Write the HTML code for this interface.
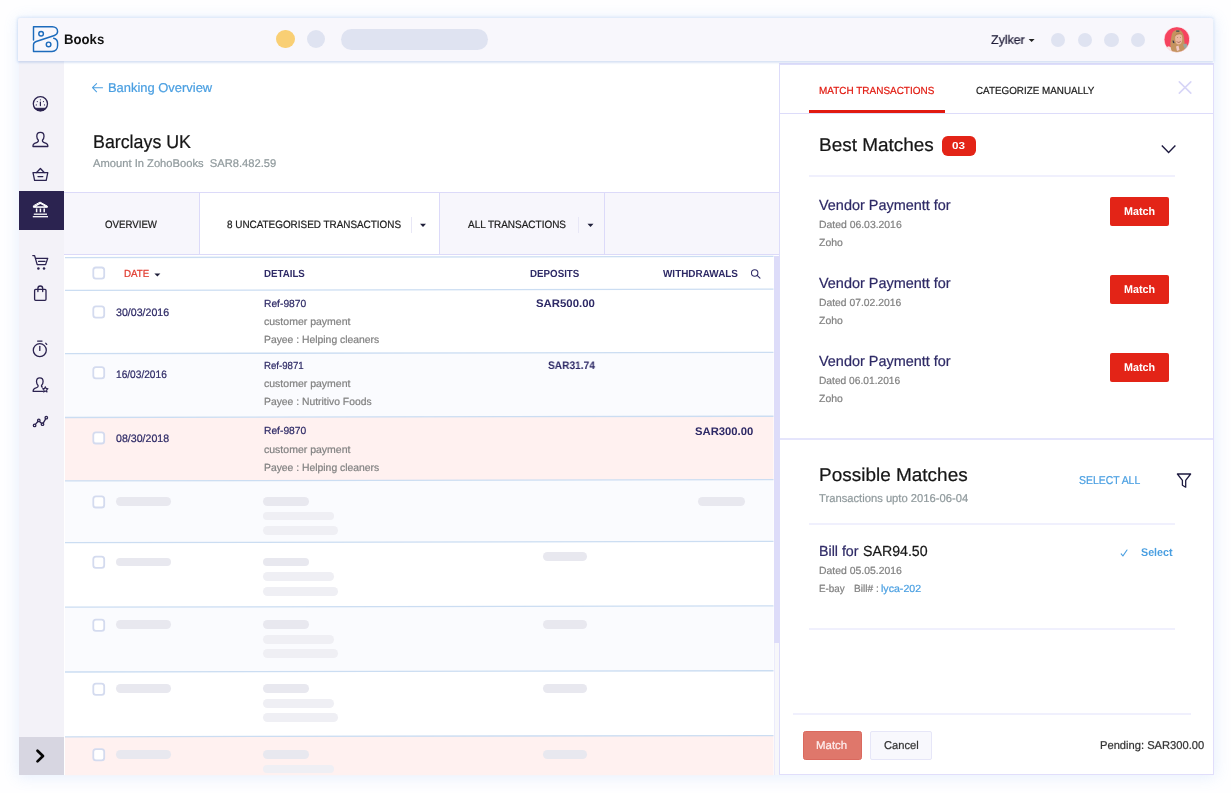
<!DOCTYPE html>
<html lang="en">
<head>
<meta charset="utf-8">
<title>Books - Banking</title>
<style>
*{box-sizing:border-box;margin:0;padding:0}
html,body{width:1231px;height:793px;overflow:hidden;background:#fefeff;font-family:"Liberation Sans",sans-serif;color:#1c1c1c}
.a{position:absolute}
.t{position:absolute;white-space:nowrap;line-height:1;transform-origin:0 0;text-rendering:geometricPrecision;-webkit-text-stroke:.22px currentColor}
.b{font-weight:700;-webkit-text-stroke:0}
#win{position:absolute;left:18.5px;top:18.5px;width:1195.5px;height:756.7px;background:#fff;box-shadow:0 1px 14px 1px rgba(105,160,240,.16)}
#hdr{position:absolute;left:18.4px;top:18.4px;width:1195px;height:42.2px;background:#f8f7fc;border-radius:2px 2px 0 0;box-shadow:0 0 3px .3px rgba(110,160,230,.2),0 2px 2px rgba(150,170,220,.2)}
#side{position:absolute;left:18.6px;top:61px;width:45.4px;height:714px;background:#f3f2f8}
.dot{position:absolute;border-radius:50%;background:#dfe3f1}
#tabs{position:absolute;left:64px;top:192px;width:716px;height:63px;background:#f7f6fc;border-top:1px solid #dcdaf9;border-bottom:1px solid #dcdaf9}
.sk{position:absolute;height:8.8px;border-radius:4.4px;background:#e8e8ef}
.sk2{position:absolute;height:8.8px;border-radius:4.4px;background:#efeff4}
#panel{position:absolute;left:779px;top:64px;width:435px;height:711px;background:#fff}
.pb{position:absolute;background:#dddcfa}
.btn{position:absolute;background:#e32417;border-radius:2px}
.hl{position:absolute;height:2px;background:#f0f0fd}
svg{position:absolute;overflow:visible}
#txt{will-change:transform}
</style>
</head>
<body>
<div id="win"></div>
<div id="side"></div>
<div class="a" style="left:18.6px;top:191.1px;width:45.4px;height:38.5px;background:#2b2350"></div>
<div class="a" style="left:18.6px;top:736.9px;width:45.4px;height:38.1px;background:#d7d6e1"></div>
<!-- main: tabs -->
<div id="tabs"></div>
<div class="a" style="left:199px;top:193px;width:241px;height:61px;background:#fff;border-left:1px solid #dcdaf9;border-right:1px solid #dcdaf9"></div>
<div class="a" style="left:603.8px;top:193px;width:1.2px;height:61px;background:#dcdaf9"></div>
<div class="a" style="left:411px;top:217px;width:1px;height:16px;background:#e8e7f6"></div>
<div class="a" style="left:578px;top:217px;width:1px;height:16px;background:#e8e7f6"></div>
<!-- table rows -->
<svg width="1231" height="793" viewBox="0 0 1231 793" style="left:0;top:0" fill="none">
<path d="M65 353.6L773.5 352.35V416.25L65 417.5Z" fill="#fafbfe"/>
<path d="M65 417.5L773.5 416.25V479.65L65 480.9Z" fill="#fff1f0"/>
<path d="M65 480.9L773.5 479.65V541.45L65 542.7Z" fill="#fafbfe"/>
<path d="M65 607.2L773.5 605.95V670.75L65 672Z" fill="#fafbfe"/>
<path d="M65 736.8L773.5 735.55V775.2H65Z" fill="#fff1f0"/>
<path d="M65 257.6L773.5 256.35M65 290.4L773.5 289.15M65 353.6L773.5 352.35M65 417.5L773.5 416.25M65 480.9L773.5 479.65M65 542.7L773.5 541.45M65 607.2L773.5 605.95M65 672L773.5 670.75M65 736.8L773.5 735.55" stroke="#cbddf2" stroke-width="1.3"/>
</svg>
<!-- scrollbar -->
<div class="a" style="left:773.5px;top:256px;width:6.2px;height:519px;background:#f7f7fa;border-left:1px solid #ebebfb;border-right:1px solid #e6e4fa"></div>
<div class="a" style="left:773.5px;top:256px;width:6.2px;height:386.9px;background:#dddcf9"></div>
<!-- checkboxes -->
<!-- panel -->
<div id="panel"></div>
<div class="pb" style="left:778.6px;top:63.3px;width:1.5px;height:712px"></div>
<div class="pb" style="left:778.6px;top:63.4px;width:435.6px;height:1.4px;background:#e0dffb"></div>
<div class="pb" style="left:1212.9px;top:63.3px;width:1.3px;height:712px;background:#e1defb"></div>
<div class="pb" style="left:778.6px;top:773.9px;width:435.6px;height:1.4px;background:#e1defb"></div>
<div class="a" style="left:780px;top:112.5px;width:433px;height:1.5px;background:#dddcfa"></div>
<div class="a" style="left:809px;top:110.2px;width:135.7px;height:3.3px;background:#e11a10"></div>
<div class="a" style="left:941.5px;top:135.6px;width:34px;height:20px;border-radius:5.8px;background:#e32417"></div>
<div class="hl" style="left:809px;top:175px;width:366.3px"></div>
<div class="btn" style="left:1110.2px;top:197px;width:59px;height:28.7px"></div>
<div class="btn" style="left:1110.2px;top:275px;width:59px;height:28.7px"></div>
<div class="btn" style="left:1110.2px;top:353px;width:59px;height:28.7px"></div>
<div class="a" style="left:780px;top:438.4px;width:433px;height:1.6px;background:#e5e5fc"></div>
<div class="hl" style="left:809px;top:523px;width:366.3px"></div>
<div class="hl" style="left:809px;top:628px;width:366.3px"></div>
<div class="hl" style="left:793.2px;top:713px;width:398px"></div>
<div class="a" style="left:802.6px;top:731px;width:59.2px;height:29px;background:#df776b;border:1px solid #da695e;border-radius:2.5px"></div>
<div class="a" style="left:870.4px;top:731px;width:61.4px;height:29px;background:#f8f8fd;border:1px solid #e6e6f8;border-radius:2px"></div>
<!-- header -->
<div id="hdr"></div>
<div class="dot" style="left:276.2px;top:30.1px;width:18.4px;height:18.4px;background:#f9cf74"></div>
<div class="dot" style="left:306.8px;top:30.1px;width:18.4px;height:18.4px"></div>
<div class="a" style="left:341.3px;top:28.7px;width:147px;height:21.3px;border-radius:10.7px;background:#dfe3f1"></div>
<div class="dot" style="left:1050.7px;top:32.7px;width:14.6px;height:14.6px"></div>
<div class="dot" style="left:1077.5px;top:32.7px;width:14.6px;height:14.6px"></div>
<div class="dot" style="left:1104px;top:32.7px;width:14.6px;height:14.6px"></div>
<div class="dot" style="left:1130.6px;top:32.7px;width:14.6px;height:14.6px"></div>
<!-- skeleton bars -->
<div class="sk" style="left:116px;top:497.2px;width:55px"></div>
<div class="sk" style="left:263px;top:497.2px;width:46px"></div>
<div class="sk2" style="left:263px;top:511.6px;width:70.5px"></div>
<div class="sk2" style="left:263px;top:526px;width:75.3px"></div>
<div class="sk" style="left:697.5px;top:497.2px;width:47.5px"></div>
<div class="sk" style="left:116px;top:557.7px;width:55px"></div>
<div class="sk" style="left:263px;top:557.7px;width:46px"></div>
<div class="sk2" style="left:263px;top:572.3px;width:70.5px"></div>
<div class="sk2" style="left:263px;top:587px;width:75.3px"></div>
<div class="sk" style="left:542.5px;top:552px;width:44.5px"></div>
<div class="sk" style="left:116px;top:620.3px;width:55px"></div>
<div class="sk" style="left:263px;top:620.3px;width:46px"></div>
<div class="sk2" style="left:263px;top:635px;width:70.5px"></div>
<div class="sk2" style="left:263px;top:649.4px;width:75.3px"></div>
<div class="sk" style="left:542.5px;top:620.3px;width:44.5px"></div>
<div class="sk" style="left:116px;top:684.3px;width:55px"></div>
<div class="sk" style="left:263px;top:684.3px;width:46px"></div>
<div class="sk2" style="left:263px;top:698.8px;width:70.5px"></div>
<div class="sk2" style="left:263px;top:713.2px;width:75.3px"></div>
<div class="sk" style="left:542.5px;top:684.3px;width:44.5px"></div>
<div class="sk" style="left:116px;top:750.3px;width:55px"></div>
<div class="sk" style="left:263px;top:750.3px;width:46px"></div>
<div class="sk2" style="left:263px;top:764.6px;width:70.5px;height:8.8px"></div>
<div class="sk" style="left:542.5px;top:750.3px;width:44.5px"></div>
<!-- icons -->
<svg width="1231" height="793" viewBox="0 0 1231 793" style="left:0;top:0" fill="none" stroke-linecap="round" stroke-linejoin="round">
<!-- checkboxes -->
<g fill="#fff" stroke="#d4dbef" stroke-width="1.8"><rect x="93.3" y="267.5" width="10.9" height="11.2" rx="2.6"/><rect x="93.3" y="306.4" width="10.9" height="11.2" rx="2.6"/><rect x="93.3" y="367.2" width="10.9" height="11.2" rx="2.6"/><rect x="93.3" y="432.3" width="10.9" height="11.2" rx="2.6"/><rect x="93.3" y="496.3" width="10.9" height="11.2" rx="2.6"/><rect x="93.3" y="556.6" width="10.9" height="11.2" rx="2.6"/><rect x="93.3" y="619.6" width="10.9" height="11.2" rx="2.6"/><rect x="93.3" y="683.7" width="10.9" height="11.2" rx="2.6"/><rect x="93.3" y="749.2" width="10.9" height="11.2" rx="2.6"/></g>
<!-- logo -->
<g stroke="#1c6bbc" stroke-width="1.45">
<path d="M33.5 39.9V26.7H52.3C55.5 26.7 57.6 28.9 57.6 31.6C57.6 33.5 56.6 34.8 54.4 35.5L36.2 41.5C34.4 42.1 33.5 43.2 33.5 44.8V51.4H52C55.5 51.4 57.6 48.8 57.6 45.6V43C57.6 40.7 56.3 38.9 53.7 38.2"/>
<circle cx="41.1" cy="33.7" r="2.3"/><circle cx="48.6" cy="44.4" r="2.3"/>
</g>
<!-- sidebar icons -->
<g stroke="#2b2350" stroke-width="1.3">
<!-- dashboard -->
<circle cx="40.4" cy="103.8" r="7.1"/>
<path d="M34.9 108.3H45.9A7.1 7.1 0 0 1 34.9 108.3Z" fill="#2b2350" stroke-width="1"/>
<path d="M40.4 102V105.6" stroke-width="1.2"/>
<g fill="#2b2350" stroke="none"><circle cx="36.3" cy="104.9" r=".6"/><circle cx="37.3" cy="101.6" r=".6"/><circle cx="40.4" cy="99.8" r=".6"/><circle cx="43.5" cy="101.6" r=".6"/><circle cx="44.5" cy="104.9" r=".6"/></g>
<!-- person -->
<path d="M40.4 132.4C42.6 132.4 44 134 44 136.2C44 138 43.3 139.3 42.4 140.2C42.2 141.3 42.6 141.9 43.6 142.3L46.2 143.4C47.3 143.9 47.8 144.6 47.8 145.6V146.5H33V145.6C33 144.6 33.5 143.9 34.6 143.4L37.2 142.3C38.2 141.9 38.6 141.3 38.4 140.2C37.5 139.3 36.8 138 36.8 136.2C36.8 134 38.2 132.4 40.4 132.4Z"/>
<!-- basket -->
<path d="M33 172.7H47.8L46.2 180.3H34.6Z"/><path d="M36.6 172.5L40.4 168.5L44.2 172.5"/><path d="M38 176.6H42.8"/>
<!-- cart -->
<path d="M32.8 255.6H34.6L37.2 264.6H45.6L47.7 258.4H36"/><path d="M38.6 261.4H45"/>
<g fill="#2b2350" stroke="none"><circle cx="38.4" cy="268.4" r="1.25"/><circle cx="44" cy="268.4" r="1.25"/></g>
<!-- bag -->
<path d="M35.6 289.4H45C45.6 289.4 46 289.8 46 290.4V299.3C46 299.9 45.6 300.3 45 300.3H35.6C35 300.3 34.6 299.9 34.6 299.3V290.4C34.6 289.8 35 289.4 35.6 289.4Z"/><path d="M37.9 291.6V288.4A2.4 2.4 0 0 1 42.7 288.4V291.6"/>
<!-- timer -->
<circle cx="39.8" cy="350.2" r="6.5"/><path d="M37.6 341.1H42"/><path d="M39.8 346.4V350.4"/><path d="M45.8 343.3L46.7 344.4"/>
<!-- person star -->
<path d="M42.6 391.4H33.2V390.6C33.2 389.6 33.7 388.9 34.8 388.4L37 387.5C38 387.1 38.3 386.5 38.1 385.5C37.2 384.6 36.5 383.3 36.5 381.6C36.5 379.4 37.8 377.9 39.8 377.9C41.8 377.9 43.1 379.4 43.1 381.6C43.1 383.3 42.4 384.6 41.5 385.5C41.4 386.3 41.6 386.8 42.2 387.1"/>
<path d="M45.3 386.7L46.1 388.4L48 388.7L46.6 390L47 391.9L45.3 391L43.6 391.9L44 390L42.6 388.7L44.5 388.4Z" stroke-width="1.1"/>
<!-- graph -->
<path d="M35.4 424.4L38.1 421.3M39.4 421.6L41.8 423.4M43.2 423.1L45.7 418.8"/>
<circle cx="34.6" cy="425.4" r="1.25"/><circle cx="38.8" cy="420.4" r="1.25"/><circle cx="42.5" cy="424.2" r="1.25"/><circle cx="46.3" cy="417.7" r="1.25"/>
</g>
<!-- bank (active) -->
<g stroke="#fff" stroke-width="1.3">
<path d="M40.4 202.3L47.4 206.2V207.3H33.4V206.2Z" fill="#fff" stroke-width="1"/>
<path d="M40.4 203.9L44.6 206.2H36.2Z" fill="#2b2350" stroke="none"/>
<path d="M36.6 208.6V212.3M40.4 208.6V212.3M44.2 208.6V212.3" stroke-width="1.5" stroke-linecap="butt"/>
<path d="M33.8 214.2H47" stroke-linecap="butt"/><path d="M32.8 216.7H48" stroke-linecap="butt"/>
</g>
<!-- expand chevron -->
<path d="M37.5 750.7L43 756L37.5 761.4" stroke="#050505" stroke-width="2.7" stroke-linecap="round" stroke-linejoin="round"/>
<!-- back arrow -->
<path d="M102.6 87.7H92.6M96.6 83.6L92.5 87.7L96.6 91.8" stroke="#4a9fe1" stroke-width="1.05"/>
<!-- carets -->
<g fill="#1f1f3a" stroke="none">
<path d="M420 223.8H426L423 226.9Z"/><path d="M587.5 223.8H593.5L590.5 226.9Z"/>
<path d="M154.4 273.4H160.4L157.4 276.5Z"/>
<path d="M1028.6 38.9H1034.6L1031.6 42Z" fill="#222"/>
</g>
<!-- search -->
<g stroke="#2e2a66" stroke-width="1.05"><circle cx="754.7" cy="273" r="3.2"/><path d="M757.1 275.4L760 278.2"/></g>
<!-- close -->
<path d="M1179.3 81.9L1190.8 93.1M1190.8 81.9L1179.3 93.1" stroke="#d7d5f7" stroke-width="1.6"/>
<!-- chevron down -->
<path d="M1161.8 145.6L1168.6 152.4L1175.4 145.6" stroke="#1d1a3f" stroke-width="1.4" stroke-linecap="butt" stroke-linejoin="miter"/>
<!-- filter -->
<path d="M1177.4 474H1190.6L1185.7 480.4V487.2L1182.4 485.2V480.4Z" stroke="#1d1a3f" stroke-width="1.3"/>
<!-- check -->
<path d="M1121.2 553.9L1122.9 556L1127 550" stroke="#4a9fe1" stroke-width="1.15"/>
<!-- avatar -->
<clipPath id="av"><circle cx="1176.9" cy="39.6" r="12.7"/></clipPath>
<g clip-path="url(#av)" stroke="none">
<rect x="1164" y="26" width="26" height="27" fill="#f6435f"/>
<path d="M1164 48.500L1168.500 46.200L1172 47.500V53H1164Z" fill="#f7e6e2"/>
<path d="M1177.800 29.800C1174.600 29.800 1172.300 32 1171.600 35.500C1171 38.500 1170.800 40.500 1170.400 43C1170 45.500 1170.800 48.500 1171.800 51.500L1172.500 53H1184.500C1185.300 50.500 1185.600 48 1185.200 46C1184.600 43 1184.300 41 1184 38C1183.500 33 1181.400 29.800 1177.800 29.800Z" fill="#c4935f"/>
<path d="M1183 44.500L1186.500 43.500L1188 47L1184.800 49Z" fill="#9aa7a0"/>
<path d="M1175.400 35.200C1176.200 33.200 1180.400 32.600 1181.800 35.400C1182.600 37.600 1182.400 41.200 1181.200 43.200C1180 44.800 1177.400 44.800 1176.200 43.200C1175.200 41.400 1174.800 37.600 1175.400 35.200Z" fill="#eab79f"/>
<path d="M1174.800 35.600C1176 32.200 1180.800 31.600 1182.600 35.200C1180.600 33.800 1177.200 34 1174.800 36.800Z" fill="#b98553"/>
<path d="M1176.300 41C1177.800 42.200 1180 42.200 1181.200 40.800C1180.900 43 1177.300 43.400 1176.300 41Z" fill="#9c5f4c"/>
<path d="M1176.200 30.600H1179.400V31.800H1176.200Z" fill="#3a4652"/>
<path d="M1172.800 40.200C1173.600 40.200 1174.300 41.600 1174.500 43.200L1173.300 43C1172.600 42.200 1172.500 41 1172.800 40.200Z" fill="#33384e"/>
<circle cx="1177.300" cy="37.600" r=".45" fill="#6a4636"/><circle cx="1180.300" cy="37.600" r=".45" fill="#6a4636"/>
<path d="M1176 46.500L1178.500 45.500L1179.500 50L1177 51Z" fill="#f1c9c6"/>
</g>
<circle cx="1176.900" cy="39.600" r="12.900" stroke="#fbeff2" stroke-width=".7" opacity=".9"/>
</svg>

<div id="txt">
<span class="t b" id="t0" style="left:63.7px;top:33px;font-size:13.8px;color:#111;transform:scaleX(0.9532);">Books</span>
<span class="t" id="t1" style="left:990.8px;top:34px;font-size:12.6px;color:#1f1c38;transform:scaleX(0.9855);">Zylker</span>
<span class="t" id="t2" style="left:108.4px;top:82px;font-size:12.8px;color:#4a9fe1;transform:scaleX(1.0103);">Banking Overview</span>
<span class="t" id="t3" style="left:93.0px;top:133px;font-size:18.5px;color:#161616;transform:scaleX(0.9628);">Barclays UK</span>
<span class="t" id="t4" style="left:93.0px;top:159px;font-size:11.2px;color:#909a9d;transform:scaleX(0.9991);">Amount In ZohoBooks&nbsp; SAR8.482.59</span>
<span class="t" id="t5" style="left:105.3px;top:220px;font-size:10.6px;color:#1c1c1c;transform:scaleX(0.9138);">OVERVIEW</span>
<span class="t" id="t6" style="left:226.6px;top:220px;font-size:10.6px;color:#1c1c1c;transform:scaleX(0.9345);">8 UNCATEGORISED TRANSACTIONS</span>
<span class="t" id="t7" style="left:468.0px;top:220px;font-size:10.6px;color:#1c1c1c;transform:scaleX(0.9405);">ALL TRANSACTIONS</span>
<span class="t" id="t8" style="left:123.5px;top:270px;font-size:10.3px;color:#e0382c;transform:scaleX(0.9475);">DATE</span>
<span class="t b" id="t9" style="left:264.4px;top:270px;font-size:10.3px;color:#2e2a66;transform:scaleX(0.9423);">DETAILS</span>
<span class="t b" id="t10" style="left:529.6px;top:270px;font-size:10.3px;color:#2e2a66;transform:scaleX(0.9467);">DEPOSITS</span>
<span class="t b" id="t11" style="left:663.2px;top:270px;font-size:10.3px;color:#2e2a66;transform:scaleX(0.9640);">WITHDRAWALS</span>
<span class="t" id="t12" style="left:116.0px;top:308px;font-size:10.8px;color:#2e2a66;transform:scaleX(0.9825);">30/03/2016</span>
<span class="t" id="t13" style="left:264.4px;top:300px;font-size:10.3px;color:#2e2a66;transform:scaleX(0.9962);">Ref-9870</span>
<span class="t" id="t14" style="left:264.4px;top:318px;font-size:10.4px;color:#828282;transform:scaleX(1.0119);">customer payment</span>
<span class="t" id="t15" style="left:264.4px;top:336px;font-size:10.4px;color:#828282;transform:scaleX(0.9971);">Payee : Helping cleaners</span>
<span class="t b" id="t16" style="left:535.8px;top:299px;font-size:11px;color:#2e2a66;transform:scaleX(1.0338);">SAR500.00</span>
<span class="t" id="t17" style="left:116.0px;top:370px;font-size:10.8px;color:#2e2a66;transform:scaleX(0.9399);">16/03/2016</span>
<span class="t" id="t18" style="left:264.4px;top:362px;font-size:10.3px;color:#2e2a66;transform:scaleX(0.9372);">Ref-9871</span>
<span class="t" id="t19" style="left:264.4px;top:380px;font-size:10.4px;color:#828282;transform:scaleX(1.0119);">customer payment</span>
<span class="t" id="t20" style="left:264.4px;top:398px;font-size:10.4px;color:#828282;transform:scaleX(0.9963);">Payee : Nutritivo Foods</span>
<span class="t b" id="t21" style="left:547.7px;top:361px;font-size:11px;color:#2e2a66;transform:scaleX(0.9239);">SAR31.74</span>
<span class="t" id="t22" style="left:116.0px;top:434px;font-size:10.8px;color:#2e2a66;transform:scaleX(0.9825);">08/30/2018</span>
<span class="t" id="t23" style="left:264.4px;top:427px;font-size:10.3px;color:#2e2a66;transform:scaleX(0.9962);">Ref-9870</span>
<span class="t" id="t24" style="left:264.4px;top:446px;font-size:10.4px;color:#828282;transform:scaleX(1.0119);">customer payment</span>
<span class="t" id="t25" style="left:264.4px;top:464px;font-size:10.4px;color:#828282;transform:scaleX(0.9971);">Payee : Helping cleaners</span>
<span class="t b" id="t26" style="left:695.4px;top:427px;font-size:11px;color:#2e2a66;transform:scaleX(1.0233);">SAR300.00</span>
<span class="t" id="t27" style="left:819.2px;top:87px;font-size:10.3px;color:#e11a10;transform:scaleX(0.9674);">MATCH TRANSACTIONS</span>
<span class="t" id="t28" style="left:975.7px;top:87px;font-size:10.3px;color:#1c1c1c;transform:scaleX(0.9565);">CATEGORIZE MANUALLY</span>
<span class="t" id="t29" style="left:819.4px;top:136px;font-size:18.5px;color:#161616;transform:scaleX(1.0243);">Best Matches</span>
<span class="t b" id="t30" style="left:951.7px;top:142px;font-size:10.2px;color:#fff;transform:scaleX(1.1460);">03</span>
<span class="t" id="t31" style="left:819.2px;top:199px;font-size:14.6px;color:#2e2a66;transform:scaleX(0.9891);">Vendor Paymentt for</span>
<span class="t" id="t32" style="left:819.2px;top:221px;font-size:10.4px;color:#828282;transform:scaleX(1.0009);">Dated 06.03.2016</span>
<span class="t" id="t33" style="left:819.2px;top:239px;font-size:10.4px;color:#828282;transform:scaleX(1.0047);">Zoho</span>
<span class="t b" id="t34" style="left:1124.3px;top:207px;font-size:11.2px;color:#fff;transform:scaleX(0.9589);">Match</span>
<span class="t" id="t35" style="left:819.2px;top:277px;font-size:14.6px;color:#2e2a66;transform:scaleX(0.9891);">Vendor Paymentt for</span>
<span class="t" id="t36" style="left:819.2px;top:299px;font-size:10.4px;color:#828282;transform:scaleX(0.9949);">Dated 07.02.2016</span>
<span class="t" id="t37" style="left:819.2px;top:317px;font-size:10.4px;color:#828282;transform:scaleX(1.0047);">Zoho</span>
<span class="t b" id="t38" style="left:1124.3px;top:285px;font-size:11.2px;color:#fff;transform:scaleX(0.9589);">Match</span>
<span class="t" id="t39" style="left:819.2px;top:355px;font-size:14.6px;color:#2e2a66;transform:scaleX(0.9891);">Vendor Paymentt for</span>
<span class="t" id="t40" style="left:819.2px;top:377px;font-size:10.4px;color:#828282;transform:scaleX(0.9828);">Dated 06.01.2016</span>
<span class="t" id="t41" style="left:819.2px;top:395px;font-size:10.4px;color:#828282;transform:scaleX(1.0047);">Zoho</span>
<span class="t b" id="t42" style="left:1124.3px;top:363px;font-size:11.2px;color:#fff;transform:scaleX(0.9589);">Match</span>
<span class="t" id="t43" style="left:819.4px;top:466px;font-size:18.5px;color:#161616;transform:scaleX(1.0256);">Possible Matches</span>
<span class="t" id="t44" style="left:819.2px;top:494px;font-size:11.4px;color:#909a9d;transform:scaleX(0.9844);">Transactions upto 2016-06-04</span>
<span class="t" id="t45" style="left:1079.0px;top:476px;font-size:11.4px;color:#4a9fe1;transform:scaleX(0.9145);">SELECT ALL</span>
<span class="t" id="t46" style="left:819.2px;top:545px;font-size:14.6px;color:#2e2a66;transform:scaleX(0.9742);">Bill for</span>
<span class="t" id="t47" style="left:863.3px;top:545px;font-size:14.6px;color:#161616;transform:scaleX(0.9710);">SAR94.50</span>
<span class="t" id="t48" style="left:819.2px;top:567px;font-size:10.4px;color:#828282;transform:scaleX(1.0021);">Dated 05.05.2016</span>
<span class="t" id="t49" style="left:819.2px;top:585px;font-size:10.4px;color:#828282;transform:scaleX(0.9464);">E-bay</span>
<span class="t" id="t50" style="left:853.7px;top:585px;font-size:10.4px;color:#828282;transform:scaleX(0.9716);">Bill# :</span>
<span class="t" id="t51" style="left:881.4px;top:585px;font-size:10.4px;color:#4a9fe1;transform:scaleX(1.0208);">lyca-202</span>
<span class="t b" id="t52" style="left:1140.7px;top:548px;font-size:11.2px;color:#4a9fe1;transform:scaleX(0.9555);">Select</span>
<span class="t" id="t53" style="left:816.4px;top:741px;font-size:11.4px;color:#fdeeee;transform:scaleX(1.0054);">Match</span>
<span class="t" id="t54" style="left:883.5px;top:741px;font-size:11.4px;color:#333;transform:scaleX(0.9811);">Cancel</span>
<span class="t" id="t55" style="left:1100.3px;top:741px;font-size:11.4px;color:#333;transform:scaleX(0.9793);">Pending: SAR300.00</span>
</div>
</body>
</html>
